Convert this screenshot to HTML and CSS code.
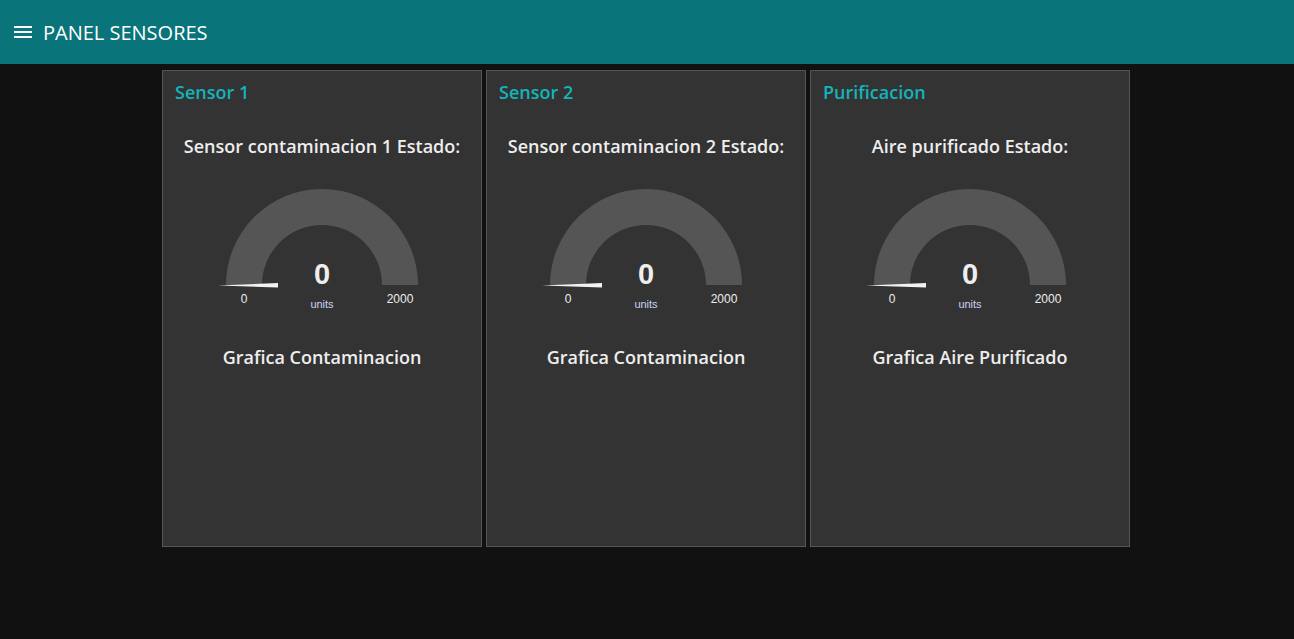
FILE: index.html
```html
<!DOCTYPE html>
<html lang="es">
<head>
<meta charset="utf-8">
<title>PANEL SENSORES</title>
<link rel="stylesheet" href="styles.css">
</head>
<body>
<header class="toolbar">
  <svg class="menu-icon" width="20" height="14" viewBox="0 0 20 14"><rect x="1" y="1" width="18" height="2" fill="#fff"/><rect x="1" y="6" width="18" height="2" fill="#fff"/><rect x="1" y="11" width="18" height="2" fill="#fff"/></svg>
  <span class="toolbar-title">PANEL SENSORES</span>
</header>
<main class="content">
  <section class="card">
    <h2 class="card-title">Sensor 1</h2>
    <p class="widget-text">Sensor contaminacion 1 Estado:</p>
    <svg class="gauge" width="224" height="130" viewBox="0 0 224 130">
      <path d="M16 100 A96 96 0 0 1 208 100 L172 100 A60 60 0 0 0 52 100 Z" fill="#555"/>
      <polygon points="8,100.5 68,98 68,102.5" fill="#f2f2f2"/>
      <text class="g-val" x="112" y="99">0</text>
      <text class="g-unit" x="112" y="123">units</text>
      <text class="g-lim" x="34" y="118">0</text>
      <text class="g-lim" x="190" y="118">2000</text>
    </svg>
    <p class="widget-text chart-label">Grafica Contaminacion</p>
  </section>
  <section class="card">
    <h2 class="card-title">Sensor 2</h2>
    <p class="widget-text">Sensor contaminacion 2 Estado:</p>
    <svg class="gauge" width="224" height="130" viewBox="0 0 224 130">
      <path d="M16 100 A96 96 0 0 1 208 100 L172 100 A60 60 0 0 0 52 100 Z" fill="#555"/>
      <polygon points="8,100.5 68,98 68,102.5" fill="#f2f2f2"/>
      <text class="g-val" x="112" y="99">0</text>
      <text class="g-unit" x="112" y="123">units</text>
      <text class="g-lim" x="34" y="118">0</text>
      <text class="g-lim" x="190" y="118">2000</text>
    </svg>
    <p class="widget-text chart-label">Grafica Contaminacion</p>
  </section>
  <section class="card">
    <h2 class="card-title">Purificacion</h2>
    <p class="widget-text">Aire purificado Estado:</p>
    <svg class="gauge" width="224" height="130" viewBox="0 0 224 130">
      <path d="M16 100 A96 96 0 0 1 208 100 L172 100 A60 60 0 0 0 52 100 Z" fill="#555"/>
      <polygon points="8,100.5 68,98 68,102.5" fill="#f2f2f2"/>
      <text class="g-val" x="112" y="99">0</text>
      <text class="g-unit" x="112" y="123">units</text>
      <text class="g-lim" x="34" y="118">0</text>
      <text class="g-lim" x="190" y="118">2000</text>
    </svg>
    <p class="widget-text chart-label">Grafica Aire Purificado</p>
  </section>
</main>
</body>
</html>
```

FILE: styles.css
```css
html, body {
  margin: 0;
  padding: 0;
  background: #111111;
  height: 100%;
}
body {
  font-family: "Open Sans", "Noto Sans", sans-serif;
  color: #eeeeee;
}
.toolbar {
  height: 64px;
  background: #097479;
  display: flex;
  align-items: center;
  padding-left: 13px;
  box-sizing: border-box;
}
.menu-icon {
  display: block;
  margin-right: 10px;
}
.toolbar-title {
  color: #ffffff;
  font-size: 20px;
  font-weight: 400;
}
.content {
  display: flex;
  justify-content: center;
  gap: 4px;
  padding: 6px 2px 0 0;
}
.card {
  width: 320px;
  height: 477px;
  box-sizing: border-box;
  background: #333333;
  border: 1px solid #555555;
  display: flex;
  flex-direction: column;
  align-items: center;
}
.card-title {
  align-self: stretch;
  margin: 0;
  padding: 6px 0 0 12px;
  line-height: 30px;
  font-size: 18px;
  font-weight: 600;
  color: #13b4bc;
}
.widget-text {
  margin: 27px 0 0;
  line-height: 24px;
  font-size: 18px;
  font-weight: 600;
  color: #eeeeee;
  text-align: center;
}
.gauge {
  display: block;
  margin-top: 27px;
}
.chart-label {
  margin-top: 30px;
}
.g-val {
  font-family: "Liberation Sans", Arial, sans-serif;
  font-weight: 700;
  font-size: 29px;
  fill: #eeeeee;
  text-anchor: middle;
}
.g-unit {
  font-family: "Liberation Sans", Arial, sans-serif;
  font-size: 11px;
  fill: #c9d4f5;
  text-anchor: middle;
}
.g-lim {
  font-family: "Liberation Sans", Arial, sans-serif;
  font-size: 12px;
  fill: #eeeeee;
  text-anchor: middle;
}
```
